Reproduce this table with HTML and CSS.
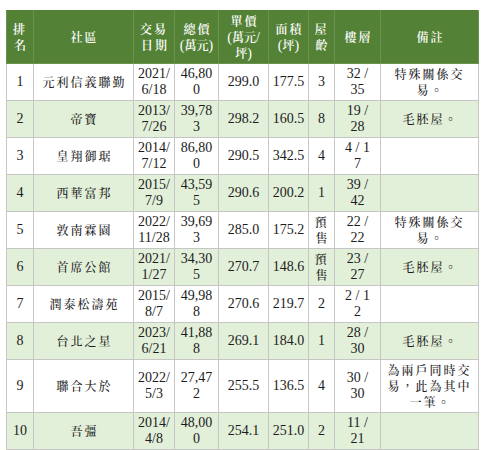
FILE: index.html
```html
<!DOCTYPE html>
<html lang="zh-Hant">
<head>
<meta charset="utf-8">
<title>成交排行</title>
<link rel="stylesheet" href="styles.css">
</head>
<body>
<table class="rank-table">
  <colgroup>
    <col class="c-rank">
    <col class="c-name">
    <col class="c-date">
    <col class="c-total">
    <col class="c-unit">
    <col class="c-area">
    <col class="c-age">
    <col class="c-floor">
    <col class="c-note">
  </colgroup>
  <thead>
    <tr>
      <th><span class="zh">排<br>名</span></th>
      <th><span class="zh">社區</span></th>
      <th><span class="zh">交易<br>日期</span></th>
      <th><span class="zh">總價</span><br>(<span class="zh zt">萬元</span>)</th>
      <th><span class="zh">單價</span><br>(<span class="zh zt">萬元</span>/<br><span class="zh zt">坪</span>)</th>
      <th><span class="zh">面積</span><br>(<span class="zh zt">坪</span>)</th>
      <th><span class="zh">屋<br>齡</span></th>
      <th><span class="zh">樓層</span></th>
      <th><span class="zh">備註</span></th>
    </tr>
  </thead>
  <tbody>
    <tr>
      <td>1</td><td><span class="zh">元利信義聯勤</span></td><td>2021/<br>6/18</td><td>46,80<br>0</td><td>299.0</td><td>177.5</td><td>3</td><td>32 /<br>35</td><td class="note"><span class="zh">特殊關係交<br>易。</span></td>
    </tr>
    <tr class="alt">
      <td>2</td><td><span class="zh">帝寶</span></td><td>2013/<br>7/26</td><td>39,78<br>3</td><td>298.2</td><td>160.5</td><td>8</td><td>19 /<br>28</td><td class="note"><span class="zh">毛胚屋。</span></td>
    </tr>
    <tr>
      <td>3</td><td><span class="zh">皇翔御琚</span></td><td>2014/<br>7/12</td><td>86,80<br>0</td><td>290.5</td><td>342.5</td><td>4</td><td>4 / 1<br>7</td><td class="note"></td>
    </tr>
    <tr class="alt">
      <td>4</td><td><span class="zh">西華富邦</span></td><td>2015/<br>7/9</td><td>43,59<br>5</td><td>290.6</td><td>200.2</td><td>1</td><td>39 /<br>42</td><td class="note"></td>
    </tr>
    <tr>
      <td>5</td><td><span class="zh">敦南霖園</span></td><td>2022/<br>11/28</td><td>39,69<br>3</td><td>285.0</td><td>175.2</td><td class="note"><span class="zh">預<br>售</span></td><td>22 /<br>22</td><td class="note"><span class="zh">特殊關係交<br>易。</span></td>
    </tr>
    <tr class="alt">
      <td>6</td><td><span class="zh">首席公館</span></td><td>2021/<br>1/27</td><td>34,30<br>5</td><td>270.7</td><td>148.6</td><td class="note"><span class="zh">預<br>售</span></td><td>23 /<br>27</td><td class="note"><span class="zh">毛胚屋。</span></td>
    </tr>
    <tr>
      <td>7</td><td><span class="zh">潤泰松濤苑</span></td><td>2015/<br>8/7</td><td>49,98<br>8</td><td>270.6</td><td>219.7</td><td>2</td><td>2 / 1<br>2</td><td class="note"></td>
    </tr>
    <tr class="alt">
      <td>8</td><td><span class="zh">台北之星</span></td><td>2023/<br>6/21</td><td>41,88<br>8</td><td>269.1</td><td>184.0</td><td>1</td><td>28 /<br>30</td><td class="note"><span class="zh">毛胚屋。</span></td>
    </tr>
    <tr>
      <td>9</td><td><span class="zh">聯合大於</span></td><td>2022/<br>5/3</td><td>27,47<br>2</td><td>255.5</td><td>136.5</td><td>4</td><td>30 /<br>30</td><td class="note"><span class="zh">為兩戶同時交<br>易，此為其中<br>一筆。</span></td>
    </tr>
    <tr class="alt">
      <td>10</td><td><span class="zh">吾彊</span></td><td>2014/<br>4/8</td><td>48,00<br>0</td><td>254.1</td><td>251.0</td><td>2</td><td>11 /<br>21</td><td class="note"></td>
    </tr>
  </tbody>
</table>
</body>
</html>
```
FILE: styles.css
```css
html, body {
  margin: 0;
  padding: 0;
  background: #ffffff;
}

.rank-table {
  border-collapse: collapse;
  table-layout: fixed;
  width: 472px;
  margin: 10px 0 0 6px;
  font-family: "Liberation Serif", "Noto Serif CJK TC", "Noto Sans CJK TC", serif;
  font-size: 14px;
  color: #1c1c1c;
}

.c-rank { width: 27px; }
.c-name { width: 100px; }
.c-date { width: 41px; }
.c-total { width: 44px; }
.c-unit { width: 50px; }
.c-area { width: 40px; }
.c-age { width: 26px; }
.c-floor { width: 46px; }
.c-note { width: 98px; }

.rank-table th,
.rank-table td {
  border: 1px solid #c6c6c6;
  padding: 2px 1px;
  text-align: center;
  vertical-align: middle;
  line-height: 16px;
  overflow: hidden;
}

.rank-table th {
  background: #538135;
  color: #ffffff;
  font-weight: normal;
  line-height: 15px;
  border-color: #6a9350;
  border-top-color: #538135;
}

.rank-table th .zh {
  font-weight: 600;
}

.rank-table tr.alt td {
  background: #e2efd9;
}

.rank-table td.note {
  line-height: 15px;
}

.zh {
  font-family: "Noto Serif CJK TC", "Noto Sans CJK TC", sans-serif;
  font-size: 12px;
  font-weight: 500;
  letter-spacing: 2px;
  margin-right: -2px;
}

.zh.zt {
  letter-spacing: 0;
  margin-right: 0;
}
```
